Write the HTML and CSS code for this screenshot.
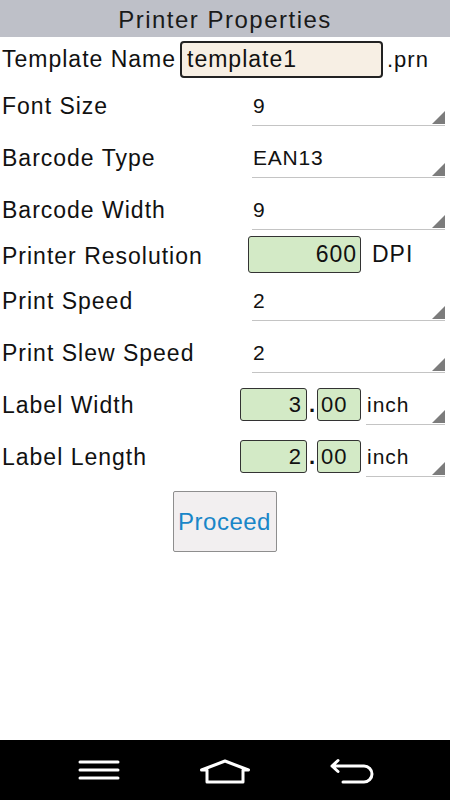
FILE: index.html
```html
<!DOCTYPE html>
<html lang="en">
<head>
    <meta charset="UTF-8">
    <meta name="viewport" content="width=device-width, initial-scale=1.0">
    <title>Printer Properties</title>
    <link rel="stylesheet" href="styles.css">
</head>
<body>

<div class="screen">
    <div class="title-bar">Printer Properties</div>

    <div class="form">
        <!-- Template name -->
        <div class="row row-template">
            <span class="label">Template Name</span>
            <input type="text" class="name-input" value="template1">
            <span class="suffix">.prn</span>
        </div>

        <div class="row">
            <span class="label">Font Size</span>
            <div class="spinner">9</div>
        </div>

        <div class="row">
            <span class="label">Barcode Type</span>
            <div class="spinner">EAN13</div>
        </div>

        <div class="row">
            <span class="label">Barcode Width</span>
            <div class="spinner">9</div>
        </div>

        <!-- Resolution -->
        <div class="row row-res">
            <span class="label">Printer Resolution</span>
            <input type="text" class="num-input res-input" value="600">
            <span class="unit">DPI</span>
        </div>

        <div class="row">
            <span class="label">Print Speed</span>
            <div class="spinner">2</div>
        </div>

        <div class="row">
            <span class="label">Print Slew Speed</span>
            <div class="spinner">2</div>
        </div>

        <!-- Label size -->
        <div class="row row-size">
            <span class="label">Label Width</span>
            <div class="size-group">
                <input type="text" class="num-input whole" value="3">
                <span class="dot">.</span>
                <input type="text" class="num-input frac" value="00">
                <div class="spinner unit-spinner">inch</div>
            </div>
        </div>

        <div class="row row-size">
            <span class="label">Label Length</span>
            <div class="size-group">
                <input type="text" class="num-input whole" value="2">
                <span class="dot">.</span>
                <input type="text" class="num-input frac" value="00">
                <div class="spinner unit-spinner">inch</div>
            </div>
        </div>

        <div class="actions">
            <button class="btn-proceed">Proceed</button>
        </div>
    </div>

    <!-- Navigation bar -->
    <div class="nav-bar">
        <svg class="nav-icon" width="52" height="30" viewBox="0 0 52 30">
            <path d="M7 7 H45 M7 15 H45 M7 23 H45" stroke="#fff" stroke-width="3" stroke-linecap="round" fill="none"/>
        </svg>
        <svg class="nav-icon" width="52" height="30" viewBox="0 0 52 30">
            <path d="M8 27 V15 H2.5 L26 6 L49.5 15 H44 V27 Z" stroke="#fff" stroke-width="3" stroke-linejoin="round" fill="none"/>
        </svg>
        <svg class="nav-icon" width="52" height="30" viewBox="0 0 52 30">
            <path d="M6 11 H38 A8 8 0 0 1 38 27 H17 M12 5.5 L6 11 L12 16.5" stroke="#fff" stroke-width="3" stroke-linecap="round" stroke-linejoin="round" fill="none"/>
        </svg>
    </div>
</div>

</body>
</html>
```

FILE: styles.css
```css
body {
    margin: 0;
    padding: 0;
    background-color: #fff;
    font-family: "Liberation Sans", Arial, sans-serif;
    color: #111;
}
.screen {
    width: 450px;
    height: 800px;
    display: flex;
    flex-direction: column;
}
.title-bar {
    height: 37px;
    line-height: 39px;
    background-color: #bec0c8;
    text-align: center;
    font-size: 24px;
    letter-spacing: 1.5px;
    color: #1a1a1a;
}
.form {
    flex: 1;
}
.row {
    display: flex;
    height: 52px;
}
.label {
    padding: 8px 0 0 2px;
    line-height: 41px;
    font-size: 23px;
    letter-spacing: 1px;
    white-space: nowrap;
}
.spinner {
    position: relative;
    box-sizing: border-box;
    width: 193px;
    height: 48px;
    margin: 0 5px 0 auto;
    padding: 9px 0 0 1px;
    line-height: 38px;
    font-size: 21px;
    letter-spacing: 0.8px;
    border-bottom: 1px solid #c4c4c4;
}
.spinner::after {
    content: "";
    position: absolute;
    right: 0;
    bottom: 1px;
    width: 0;
    height: 0;
    border-left: 13px solid transparent;
    border-bottom: 13px solid #7c7c7c;
}
input {
    font-family: "Liberation Sans", Arial, sans-serif;
    color: #111;
    outline: none;
}

/* template name */
.row-template {
    height: 41px;
    align-items: flex-end;
}
.row-template .label {
    padding-top: 0;
    line-height: 37px;
    width: 178px;
}
.name-input {
    box-sizing: border-box;
    width: 203px;
    height: 37px;
    padding: 0 5px;
    background-color: #f7efe4;
    border: 2px solid #222;
    border-radius: 4px;
    font-size: 23px;
    letter-spacing: 1px;
}
.suffix {
    line-height: 37px;
    font-size: 22px;
    letter-spacing: 1px;
    margin-left: 4px;
}

/* numeric boxes */
.num-input {
    box-sizing: border-box;
    height: 33px;
    padding: 0 4px;
    background-color: #d3eac6;
    border: 1px solid #333;
    border-radius: 3px;
    font-size: 22px;
    letter-spacing: 1px;
}
.row-res {
    height: 39px;
    align-items: flex-end;
}
.row-res .label {
    padding-top: 4px;
    margin-bottom: -2px;
    line-height: 37px;
    width: 246px;
}
.res-input {
    width: 113px;
    height: 37px;
    padding-right: 3px;
    text-align: right;
    font-size: 23px;
}
.unit {
    line-height: 37px;
    font-size: 23px;
    letter-spacing: 1px;
    margin-left: 11px;
}

/* label size rows */
.row-size .label {
    padding-top: 9px;
    line-height: 39px;
    width: 240px;
}
.size-group {
    display: flex;
    align-items: flex-start;
    flex: 1;
}
.size-group .num-input {
    margin-top: 11px;
}
.whole {
    width: 67px;
    text-align: right;
}
.frac {
    width: 44px;
    padding-left: 3px;
}
.dot {
    margin-top: 11px;
    width: 10px;
    line-height: 33px;
    text-align: center;
    font-size: 22px;
    font-weight: bold;
}
.unit-spinner {
    width: 79px;
    padding-top: 9px;
    line-height: 38px;
    margin-left: 5px;
    font-size: 21px;
    letter-spacing: 1px;
}

.actions {
    display: flex;
    justify-content: center;
    padding-top: 10px;
}
.btn-proceed {
    width: 104px;
    height: 61px;
    padding: 0;
    margin-left: -1px;
    background-color: #f2eff0;
    border: 1px solid #8e8e8e;
    border-radius: 2px;
    font-family: "Liberation Sans", Arial, sans-serif;
    font-size: 24px;
    letter-spacing: 0.5px;
    color: #1986c8;
    cursor: pointer;
}

.nav-bar {
    height: 60px;
    background-color: #000;
    display: flex;
    align-items: center;
    justify-content: center;
    gap: 74.5px;
}
.nav-icon {
    display: block;
}
```
